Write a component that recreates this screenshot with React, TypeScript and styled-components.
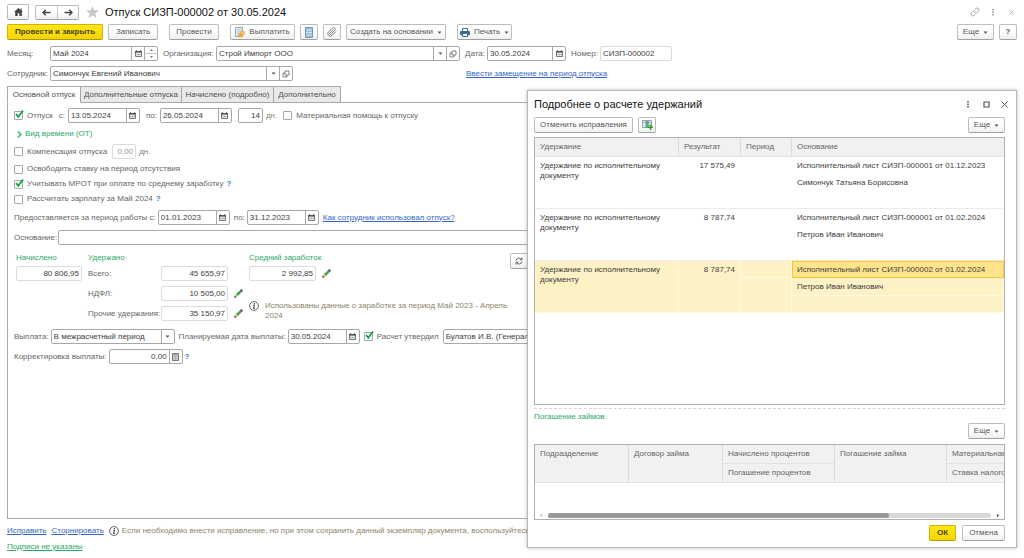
import React from "react";
import styled, { createGlobalStyle, css } from "styled-components";

const c = {
  text: "#404040",
  label: "#666666",
  green: "#2ba866",
  link: "#3468c0",
  hint: "#8c8468",
  line: "#a8a8a8",
  soft: "#dcdcdc",
};

const GlobalStyle = createGlobalStyle`
  *, *::before, *::after { box-sizing: border-box; }
  html, body { margin: 0; padding: 0; background: #fff; }
  svg { flex: none; }
  body, button, input, select, table {
    font-family: "Liberation Sans", Arial, sans-serif;
    font-size: 8px;
    line-height: 10px;
    color: ${c.text};
  }
`;

/* ---------- page ---------- */
const Page = styled.div`
  position: relative;
  display: flex;
  flex-direction: column;
  min-height: 100vh;
  padding: 4px 7px 6px 7px;
  overflow: hidden;
`;

const Row = styled.div<{ $gap?: number; $h?: number; $mt?: number; $mr?: number; $top?: boolean }>`
  display: flex;
  align-items: ${(p) => (p.$top ? "flex-start" : "center")};
  gap: ${(p) => p.$gap ?? 6}px;
  min-height: ${(p) => p.$h ?? 15}px;
  margin-top: ${(p) => p.$mt ?? 0}px;
  margin-right: ${(p) => p.$mr ?? 0}px;
  white-space: nowrap;
`;

const Spacer = styled.div`
  flex: 1;
`;

const Title = styled.h1`
  margin: 0;
  font-size: 11px;
  line-height: 15px;
  font-weight: 400;
  color: #111;
`;

const Button = styled.button<{ $w?: number; $primary?: boolean; $ml?: number }>`
  display: inline-flex;
  align-items: center;
  justify-content: center;
  gap: 4px;
  flex: none;
  width: ${(p) => (p.$w ? `${p.$w}px` : "auto")};
  height: 16px;
  margin: 0 0 0 ${(p) => p.$ml ?? 0}px;
  padding: 0 1px;
  border: 1px solid #bdbdbd;
  border-bottom-color: #a0a0a0;
  border-radius: 2px;
  background: linear-gradient(#ffffff 40%, #efefef);
  color: #555;
  white-space: nowrap;
  ${(p) =>
    p.$primary &&
    css`
      font-weight: 700;
      color: #4a4420;
      border-color: #d0b400;
      border-bottom-color: #b09a10;
      background: linear-gradient(#ffe61a, #f3d500);
    `}
`;

const NavGroup = styled.div`
  display: flex;
  margin: 0 7px 0 6px;
  border: 1px solid #bdbdbd;
  border-bottom-color: #a0a0a0;
  border-radius: 2px;
  background: linear-gradient(#ffffff 40%, #efefef);
`;

const NavButton = styled.button`
  display: flex;
  align-items: center;
  justify-content: center;
  width: 21px;
  height: 13px;
  padding: 0;
  border: 0;
  background: none;
  & + & {
    border-left: 1px solid #c8c8c8;
  }
`;

const IconButton = styled.button`
  display: flex;
  align-items: center;
  justify-content: center;
  padding: 0;
  width: 12px;
  height: 12px;
  border: 0;
  background: none;
`;

/* ---------- fields ---------- */
const Label = styled.label<{ $w?: number; $tone?: string }>`
  flex: none;
  width: ${(p) => (p.$w ? `${p.$w}px` : "auto")};
  color: ${(p) => p.$tone ?? c.label};
`;

const FieldBox = styled.div<{ $w?: number; $soft?: boolean }>`
  display: flex;
  ${(p) => (p.$w ? `flex: none; width: ${p.$w}px;` : "flex: 1;")}
  height: 15px;
  min-width: 0;
  border: 1px solid ${(p) => (p.$soft ? c.soft : c.line)};
  border-radius: 2px;
  background: #fff;
`;

const Input = styled.input<{ $right?: boolean; $dim?: boolean }>`
  flex: 1;
  min-width: 0;
  width: 0;
  padding: 0 2px;
  border: 0;
  outline: 0;
  background: transparent;
  text-align: ${(p) => (p.$right ? "right" : "left")};
  color: ${(p) => (p.$dim ? "#999" : c.text)};
`;

const Part = styled.button`
  display: flex;
  align-items: center;
  justify-content: center;
  flex: none;
  width: 13px;
  padding: 0;
  border: 0;
  border-left: 1px solid ${c.line};
  background: none;
`;

const Spin = styled.div`
  display: flex;
  flex-direction: column;
  flex: none;
  width: 13px;
  border-left: 1px solid ${c.line};
  button {
    display: flex;
    align-items: center;
    justify-content: center;
    flex: 1;
    padding: 0;
    border: 0;
    background: none;
  }
  button + button {
    border-top: 1px solid #c8c8c8;
  }
`;

const Link = styled.a<{ $green?: boolean; $ml?: number }>`
  margin-left: ${(p) => p.$ml ?? 0}px;
  color: ${(p) => (p.$green ? c.green : c.link)};
  text-decoration: underline;
`;

const Help = styled.button`
  padding: 0;
  margin: 0;
  border: 0;
  background: none;
  font-weight: 700;
  color: #2a86d0;
`;

const Green = styled.span`
  color: ${c.green};
`;

const Hint = styled.span<{ $w?: number }>`
  color: ${c.hint};
  ${(p) => p.$w && `flex: none; width: ${p.$w}px; white-space: normal;`}
`;

const CheckLabel = styled.label`
  display: inline-flex;
  align-items: center;
  gap: 4px;
  color: ${c.label};
`;

const CheckWrap = styled.span`
  position: relative;
  display: block;
  width: 9px;
  height: 9px;
  input {
    appearance: none;
    display: block;
    width: 9px;
    height: 9px;
    margin: 0;
    border: 1px solid ${c.line};
    border-radius: 1px;
    background: #fff;
  }
  svg {
    position: absolute;
    left: 0;
    top: -2px;
    pointer-events: none;
  }
`;

/* ---------- tabs and panel ---------- */
const Tabs = styled.div`
  display: flex;
  margin-top: 5px;
`;

const Tab = styled.button<{ $w: number; $active?: boolean }>`
  width: ${(p) => p.$w}px;
  height: 17px;
  margin: 0 0 -1px;
  padding: 0;
  border: 1px solid ${c.line};
  border-left-width: ${(p) => (p.$active ? 1 : 0)}px;
  border-bottom-color: ${(p) => (p.$active ? "#fff" : c.line)};
  background: ${(p) => (p.$active ? "#fff" : "#e9e9e9")};
  color: #505050;
  z-index: 1;
`;

const Panel = styled.section`
  flex: 1;
  display: flex;
  flex-direction: column;
  padding: 5px 6px;
  border: 1px solid ${c.line};
`;

const Totals = styled.div`
  display: flex;
  align-items: flex-start;
  margin: 8px 0 0 2px;
`;

const TotalCol = styled.div<{ $ml?: number; $w?: number }>`
  display: flex;
  flex-direction: column;
  flex: none;
  width: ${(p) => (p.$w ? `${p.$w}px` : "auto")};
  margin-left: ${(p) => p.$ml ?? 0}px;
`;

/* ---------- dialog ---------- */
const Dialog = styled.section`
  position: absolute;
  top: 90px;
  right: 7px;
  bottom: 10px;
  z-index: 2;
  display: flex;
  flex-direction: column;
  width: 490px;
  padding: 6px 11px 6px 6px;
  border: 1px solid #b8b8b8;
  background: #fff;
  box-shadow: 0 0 4px rgba(0, 0, 0, 0.25);
`;

const DialogTitle = styled.h2`
  margin: 0;
  font-size: 11px;
  line-height: 14px;
  font-weight: 400;
  color: #111;
`;

const TableBox = styled.div<{ $grow?: boolean; $mt: number }>`
  display: flex;
  flex-direction: column;
  ${(p) => (p.$grow ? "flex: 1;" : "height: 76px;")}
  margin-top: ${(p) => p.$mt}px;
  border: 1px solid #b0b0b0;
  overflow: hidden;
`;

const Grid = styled.table<{ $w?: number }>`
  flex: none;
  width: ${(p) => (p.$w ? `${p.$w}px` : "100%")};
  border-collapse: separate;
  border-spacing: 0;
  table-layout: fixed;
  th {
    height: 18px;
    padding: 4px 5px;
    background: #f1f1f1;
    border-right: 1px solid #dcdcdc;
    border-bottom: 1px solid #e2e2e2;
    font-weight: 400;
    text-align: left;
    vertical-align: top;
    color: ${c.label};
    white-space: nowrap;
  }
  th:last-child {
    border-right: 0;
  }
`;

const Cell = styled.td<{ $on?: boolean; $cur?: boolean; $right?: boolean; $end?: boolean; $h?: number }>`
  height: ${(p) => p.$h ?? 17}px;
  padding: 4px 5px 0;
  vertical-align: top;
  text-align: ${(p) => (p.$right ? "right" : "left")};
  border-right: 1px solid ${(p) => (p.$on ? "#fff8e2" : "transparent")};
  border-bottom: 1px solid ${(p) => (p.$on ? "#fff8e2" : p.$end ? "#ececec" : "transparent")};
  background: ${(p) => (p.$on ? "#fdf1c6" : "#fff")};
  ${(p) =>
    p.$cur &&
    css`
      padding: 3px 4px 0;
      border: 1px solid #f5c830;
      background: #ffe48c;
    `}
`;

const Divider = styled.div`
  margin-top: 3px;
  border-top: 1px dashed #d4d4d4;
`;

const ScrollRow = styled.div`
  display: flex;
  align-items: center;
  gap: 5px;
  margin-top: auto;
  padding: 0 4px 1px;
`;

const Track = styled.div`
  flex: 1;
  height: 5px;
  border-radius: 3px;
  background: #d8d8d8;
`;

const Thumb = styled.div`
  width: 77%;
  height: 5px;
  border-radius: 3px;
  background: #999;
`;

/* ---------- icons ---------- */
const CalendarIcon = () => (
  <svg width="7" height="7" viewBox="0 0 7 7">
    <path d="M0.5 1.5h6v5h-6z" fill="#e4e4e4" stroke="#777" />
    <path d="M0 1h7v1.600H0z" fill="#555" />
    <path d="M1.500 0v1M5.500 0v1" stroke="#777" />
    <path d="M1.500 4.500h4" stroke="#999" strokeDasharray="1 .5" />
  </svg>
);
const Caret = () => (
  <svg width="5" height="3" viewBox="0 0 5 3">
    <path d="M0.5 0.5h4L2.5 2.7z" fill="#555" />
  </svg>
);
const Tiny = ({ down }: { down?: boolean }) => (
  <svg width="3" height="2" viewBox="0 0 3 2">
    <path d={down ? "M0 0h3L1.5 2z" : "M0 2h3L1.5 0z"} fill="#777" />
  </svg>
);
const OpenIcon = () => (
  <svg width="8" height="8" viewBox="0 0 8 8" fill="none" stroke="#666" strokeWidth=".8">
    <path d="M3 1h4v4H3z" />
    <path d="M3 3H1v4h4V5" />
  </svg>
);
const CalcIcon = () => (
  <svg width="7" height="8" viewBox="0 0 7 8">
    <path d="M.5.5h6v7h-6z" fill="#ddd" stroke="#777" />
    <path d="M1.5 2h4" stroke="#777" />
    <path d="M1.5 4h4M1.5 6h4" stroke="#888" strokeDasharray="1 .5" />
  </svg>
);
const HomeIcon = () => (
  <svg width="9" height="8" viewBox="0 0 9 8">
    <path d="M4.5 0 9 4H7.8v4H5.4V5.2H3.6V8H1.2V4H0z" fill="#444" />
    <path d="M6.6.5h1.2v2H6.6z" fill="#444" />
  </svg>
);
const Arrow = ({ right }: { right?: boolean }) => (
  <svg width="9" height="7" viewBox="0 0 9 7">
    <path
      d={right ? "M.5 3.5h7.5M5.2.8 8 3.5 5.2 6.2" : "M8.500 3.500H1M3.800.8 1 3.500 3.800 6.200"}
      fill="none"
      stroke="#444"
      strokeWidth="1.4"
    />
  </svg>
);
const Star = () => (
  <svg width="13" height="12" viewBox="0 0 13 12">
    <path d="M6.5 0 8.200 4.200 13 4.500 9.300 7.400 10.500 12 6.500 9.400 2.500 12 3.700 7.400 0 4.500 4.800 4.200z" fill="#c9c9c9" />
  </svg>
);
const LinkIcon = () => (
  <svg width="10" height="10" viewBox="0 0 24 24" fill="none" stroke="#aaa" strokeWidth="2.4">
    <path d="M10 13a5 5 0 0 0 7.500.500l3-3a5 5 0 0 0-7-7l-1.700 1.700" />
    <path d="M14 11a5 5 0 0 0-7.500-.500l-3 3a5 5 0 0 0 7 7l1.700-1.700" />
  </svg>
);
const Dots = ({ color = "#777" }: { color?: string }) => (
  <svg width="2" height="8" viewBox="0 0 2 8" fill={color}>
    <path d="M0 1h2v1.500H0zM0 3.500h2V5H0zM0 6h2v1.500H0z" />
  </svg>
);
const Cross = ({ size = 7, color = "#555" }: { size?: number; color?: string }) => (
  <svg width={size} height={size} viewBox="0 0 7 7">
    <path d="M.5.5l6 6M6.500.5l-6 6" stroke={color} />
  </svg>
);
const Square = () => (
  <svg width="7" height="7" viewBox="0 0 7 7">
    <path d="M1 1h5v5H1z" fill="none" stroke="#555" strokeWidth="1.200" />
  </svg>
);
const PayIcon = () => (
  <svg width="10" height="11" viewBox="0 0 10 11">
    <path d="M.5.5h7v9h-7z" fill="#dfeaf3" stroke="#8aa6bd" />
    <path d="M2 3h4M2 5h4M2 7h3" stroke="#9cb6ca" strokeWidth=".7" />
    <circle cx="5.500" cy="8.300" r="2.300" fill="#f0a830" />
    <circle cx="7.500" cy="6" r="2.200" fill="#f6c45a" stroke="#cf8a20" strokeWidth=".4" />
  </svg>
);
const ListIcon = () => (
  <svg width="8" height="11" viewBox="0 0 8 11">
    <path d="M.5.5h7v10h-7z" fill="#9dbcd6" stroke="#7298b8" />
    <path d="M1 3h6M1 5.500h6M1 8h6" stroke="#e3edf5" strokeWidth=".8" />
  </svg>
);
const ClipIcon = () => (
  <svg width="10" height="10" viewBox="0 0 24 24" fill="none" stroke="#777" strokeWidth="2.200">
    <path d="m21.400 11-9.200 9.200a6 6 0 0 1-8.500-8.500l9.200-9.200a4 4 0 0 1 5.700 5.700l-9.200 9.200a2 2 0 0 1-2.800-2.800l8.500-8.500" />
  </svg>
);
const PrintIcon = () => (
  <svg width="10" height="9" viewBox="0 0 10 9">
    <path d="M2.500.5h5v3h-5z" fill="#fff" stroke="#3d6d92" />
    <rect x="0" y="3" width="10" height="4.200" rx="1" fill="#3d6d92" />
    <path d="M2.500 5.500h5v3h-5z" fill="#fff" stroke="#3d6d92" />
  </svg>
);
const Pencil = () => (
  <svg width="9" height="9" viewBox="0 0 9 9">
    <path d="M0 9 .8 6.300 2.700 8.200z" fill="#555" />
    <path d="M.8 6.300 2 5.100 3.900 7 2.700 8.200z" fill="#e6b877" />
    <path d="M2 5.100 6 1.200 7.800 3 3.900 7z" fill="#3da54a" />
    <path d="M6 1.200 7 .2Q7.400 0 7.800.4L8.700 1.300Q9 1.600 8.700 2L7.800 3z" fill="#444" />
  </svg>
);
const InfoIcon = () => (
  <svg width="10" height="10" viewBox="0 0 10 10">
    <circle cx="5" cy="5" r="4.400" fill="#fff" stroke="#555" strokeWidth=".9" />
    <path d="M5.400 2v1.200M4.200 4.300h1.100L4.700 7.500h1" fill="none" stroke="#444" strokeWidth="1.100" />
  </svg>
);
const Refresh = () => (
  <svg width="8" height="8" viewBox="0 0 8 8" fill="none" stroke="#555" strokeWidth=".9">
    <path d="M1 3.600A3 3 0 0 1 6.500 2.400M7 .5v2.300H4.800M7 4.400A3 3 0 0 1 1.500 5.600M1 7.500V5.200h2.200" />
  </svg>
);
const Chevron = () => (
  <svg width="5" height="7" viewBox="0 0 5 7">
    <path d="M.8.5 4 3.500.8 6.500" fill="none" stroke={c.green} strokeWidth="1.200" />
  </svg>
);
const TableAddIcon = () => (
  <svg width="11" height="10" viewBox="0 0 11 10">
    <path d="M.5.5h9v7h-9z" fill="#e9f1f7" stroke="#6f93ad" strokeWidth=".8" />
    <path d="M4 1h2.600v6.500H4z" fill="#5fae6c" />
    <path d="M1 2.500h8.500M3.600.5v7M6.800.5v7" stroke="#6f93ad" strokeWidth=".6" />
    <path d="M8.500 4.500V10M5.800 7.300H11" stroke="#2ea32e" strokeWidth="1.500" />
  </svg>
);
const ScrollArrow = ({ right }: { right?: boolean }) => (
  <svg width="4" height="5" viewBox="0 0 4 5">
    <path d={right ? "M1 .8v3.400L3.200 2.500z" : "M3 .8v3.400L.8 2.500z"} fill={right ? "#555" : "#bbb"} />
  </svg>
);

/* ---------- composite controls ---------- */
type FieldProps = {
  id: string;
  value: string;
  w?: number;
  soft?: boolean;
  right?: boolean;
  dim?: boolean;
  name?: string;
  children?: React.ReactNode;
};
const Field = ({ id, value, w, soft, right, dim, name, children }: FieldProps) => (
  <FieldBox $w={w} $soft={soft}>
    <Input id={id} defaultValue={value} $right={right} $dim={dim} aria-label={name} />
    {children}
  </FieldBox>
);

const CalendarPart = () => (
  <Part aria-label="Календарь">
    <CalendarIcon />
  </Part>
);
const DropPart = () => (
  <Part aria-label="Выбрать">
    <Caret />
  </Part>
);

const Check = ({ on, children }: { on?: boolean; children: React.ReactNode }) => (
  <CheckLabel>
    <CheckWrap>
      <input type="checkbox" defaultChecked={on} />
      {on && (
        <svg width="11" height="10" viewBox="0 0 11 10">
          <path d="M2 5 4.300 7.800 9 1.500" fill="none" stroke="#15a04e" strokeWidth="1.800" />
        </svg>
      )}
    </CheckWrap>
    {children}
  </CheckLabel>
);

const MoreButton = () => (
  <Button $w={37}>
    Еще <Caret />
  </Button>
);

const deductions = [
  { sum: "17 575,49", doc: "Исполнительный лист СИЗП-000001 от 01.12.2023", who: "Симончук Татьяна Борисовна" },
  { sum: "8 787,74", doc: "Исполнительный лист СИЗП-000001 от 01.02.2024", who: "Петров Иван Иванович" },
  { sum: "8 787,74", doc: "Исполнительный лист СИЗП-000002 от 01.02.2024", who: "Петров Иван Иванович", on: true },
];

const DeductionsDialog = () => (
  <Dialog role="dialog" aria-labelledby="dlg-title">
    <Row $gap={6} $h={14} $mr={-5}>
      <DialogTitle id="dlg-title">Подробнее о расчете удержаний</DialogTitle>
      <Spacer />
      <IconButton aria-label="Меню"><Dots /></IconButton>
      <IconButton aria-label="Развернуть"><Square /></IconButton>
      <IconButton aria-label="Закрыть"><Cross /></IconButton>
    </Row>
    <Row $gap={5} $h={16} $mt={6}>
      <Button $w={99}>Отменить исправления</Button>
      <Button $w={18} aria-label="Добавить"><TableAddIcon /></Button>
      <Spacer />
      <MoreButton />
    </Row>
    <TableBox $grow $mt={4}>
      <Grid>
        <colgroup>
          <col style={{ width: 144 }} />
          <col style={{ width: 62 }} />
          <col style={{ width: 51 }} />
          <col />
        </colgroup>
        <thead>
          <tr>
            <th>Удержание</th>
            <th>Результат</th>
            <th>Период</th>
            <th>Основание</th>
          </tr>
        </thead>
        {deductions.map((d, i) => (
          <tbody key={i}>
            <tr>
              <Cell rowSpan={3} $on={d.on} $end>Удержание по исполнительному документу</Cell>
              <Cell rowSpan={3} $on={d.on} $end $right>{d.sum}</Cell>
              <Cell $on={d.on} />
              <Cell $on={d.on} $cur={d.on}>{d.doc}</Cell>
            </tr>
            <tr>
              <Cell rowSpan={2} $on={d.on} $end />
              <Cell $on={d.on} $h={18}>{d.who}</Cell>
            </tr>
            <tr>
              <Cell $on={d.on} $end />
            </tr>
          </tbody>
        ))}
      </Grid>
    </TableBox>
    <Divider />
    <Row $h={10} $mt={3}><Green>Погашение займов</Green></Row>
    <Row $h={16} $mt={1}>
      <Spacer />
      <MoreButton />
    </Row>
    <TableBox $mt={5}>
      <Grid $w={520}>
        <colgroup>
          <col style={{ width: 94 }} />
          <col style={{ width: 94 }} />
          <col style={{ width: 112 }} />
          <col style={{ width: 112 }} />
          <col />
        </colgroup>
        <thead>
          <tr>
            <th rowSpan={2}>Подразделение</th>
            <th rowSpan={2}>Договор займа</th>
            <th>Начислено процентов</th>
            <th rowSpan={2}>Погашение займа</th>
            <th>Материальная</th>
          </tr>
          <tr>
            <th>Погашение процентов</th>
            <th>Ставка налогообложения</th>
          </tr>
        </thead>
      </Grid>
      <ScrollRow>
        <ScrollArrow />
        <Track><Thumb /></Track>
        <ScrollArrow right />
      </ScrollRow>
    </TableBox>
    <Row $gap={6} $h={16} $mt={5}>
      <Spacer />
      <Button $w={27} $primary>ОК</Button>
      <Button $w={43}>Отмена</Button>
    </Row>
  </Dialog>
);

export default function App() {
  return (
    <>
      <GlobalStyle />
      <Page>
        <Row $gap={0}>
          <Button $w={22} aria-label="Домой"><HomeIcon /></Button>
          <NavGroup>
            <NavButton aria-label="Назад"><Arrow /></NavButton>
            <NavButton aria-label="Вперед"><Arrow right /></NavButton>
          </NavGroup>
          <Row>
            <Star />
            <Title>Отпуск СИЗП-000002 от 30.05.2024</Title>
          </Row>
          <Spacer />
          <Row>
            <IconButton aria-label="Ссылка"><LinkIcon /></IconButton>
            <IconButton aria-label="Меню"><Dots color="#aaa" /></IconButton>
            <IconButton aria-label="Закрыть"><Cross size={5} color="#999" /></IconButton>
          </Row>
        </Row>

        <Row $gap={5} $h={16} $mt={4}>
          <Button $w={96} $primary>Провести и закрыть</Button>
          <Button $w={50}>Записать</Button>
          <Button $w={50} $ml={6}>Провести</Button>
          <Button $w={65} $ml={6}><PayIcon /> Выплатить</Button>
          <Button $w={18} aria-label="Список"><ListIcon /></Button>
          <Button $w={18} aria-label="Файлы"><ClipIcon /></Button>
          <Button $w={100}>Создать на основании <Caret /></Button>
          <Button $w={55} $ml={6}><PrintIcon /> Печать <Caret /></Button>
          <Spacer />
          <MoreButton />
          <Button $w={18}><b>?</b></Button>
        </Row>

        <Row $gap={0} $mt={6}>
          <Label htmlFor="month" $w={43}>Месяц:</Label>
          <Field id="month" value="Май 2024" w={108}>
            <CalendarPart />
            <Spin>
              <button aria-label="Больше"><Tiny /></button>
              <button aria-label="Меньше"><Tiny down /></button>
            </Spin>
          </Field>
          <Label htmlFor="org" $w={58}>
            <Row $gap={5}><span />Организация:</Row>
          </Label>
          <Row $gap={5}>
            <Field id="org" value="Строй Импорт ООО" w={244}>
              <DropPart />
              <Part aria-label="Открыть"><OpenIcon /></Part>
            </Field>
            <Label htmlFor="date" $w={17}>Дата:</Label>
            <Field id="date" value="30.05.2024" w={79}><CalendarPart /></Field>
            <Label htmlFor="num" $w={24}>Номер:</Label>
            <Field id="num" value="СИЗП-000002" w={72} soft />
          </Row>
        </Row>

        <Row $gap={0} $mt={5}>
          <Label htmlFor="emp" $w={43}>Сотрудник:</Label>
          <Field id="emp" value="Симончук Евгений Иванович" w={243}>
            <DropPart />
            <Part aria-label="Открыть"><OpenIcon /></Part>
          </Field>
          <Link href="#" $ml={173}>Ввести замещение на период отпуска</Link>
        </Row>

        <Tabs role="tablist">
          <Tab role="tab" $w={74} $active>Основной отпуск</Tab>
          <Tab role="tab" $w={101}>Дополнительные отпуска</Tab>
          <Tab role="tab" $w={92}>Начислено (подробно)</Tab>
          <Tab role="tab" $w={67}>Дополнительно</Tab>
        </Tabs>

        <Panel>
          <Row>
            <Check on>Отпуск</Check>
            <Row $gap={3}>
              <Label htmlFor="from">с:</Label>
              <Field id="from" value="13.05.2024" w={72}><CalendarPart /></Field>
            </Row>
            <Row $gap={3}>
              <Label htmlFor="to">по:</Label>
              <Field id="to" value="26.05.2024" w={72}><CalendarPart /></Field>
            </Row>
            <Row $gap={3}>
              <Field id="days" value="14" w={25} right name="Количество дней" />
              <Label htmlFor="days" $tone={c.hint}>дн.</Label>
            </Row>
            <Check>Материальная помощь к отпуску</Check>
          </Row>
          <Row $h={10} $mt={6} $gap={3}>
            <span />
            <Chevron />
            <Green>Вид времени (ОТ)</Green>
          </Row>
          <Row $mt={5} $gap={5}>
            <Check>Компенсация отпуска</Check>
            <Row $gap={3}>
              <Field id="comp" value="0,00" w={24} soft right dim name="Дней компенсации" />
              <Label htmlFor="comp" $tone={c.hint}>дн.</Label>
            </Row>
          </Row>
          <Row $h={10} $mt={5}><Check>Освободить ставку на период отсутствия</Check></Row>
          <Row $h={10} $mt={5} $gap={3}>
            <Check on>Учитывать МРОТ при оплате по среднему заработку</Check>
            <Help>?</Help>
          </Row>
          <Row $h={10} $mt={5} $gap={3}>
            <Check>Рассчитать зарплату за Май 2024</Check>
            <Help>?</Help>
          </Row>
          <Row $mt={6} $gap={4}>
            <Row $gap={2}>
              <Label htmlFor="p1">Предоставляется за период работы с:</Label>
              <Field id="p1" value="01.01.2023" w={72}><CalendarPart /></Field>
            </Row>
            <Row $gap={2}>
              <Label htmlFor="p2">по:</Label>
              <Field id="p2" value="31.12.2023" w={72}><CalendarPart /></Field>
            </Row>
            <Link href="#">Как сотрудник использовал отпуск?</Link>
          </Row>
          <Row $mt={5} $gap={0}>
            <Label htmlFor="base" $w={44}>Основание:</Label>
            <Field id="base" value="" />
          </Row>

          <Totals>
            <TotalCol>
              <Row $h={10}><Green>Начислено</Green></Row>
              <Row $mt={3}><Field id="acc" value="80 806,95" w={66} soft right name="Начислено" /></Row>
            </TotalCol>
            <TotalCol $ml={6}>
              <Row $h={10}><Green>Удержано</Green></Row>
              <Row $mt={3} $gap={0}>
                <Label htmlFor="t1" $w={73}>Всего:</Label>
                <Field id="t1" value="45 655,97" w={67} soft right />
              </Row>
              <Row $mt={5} $gap={0}>
                <Label htmlFor="t2" $w={73}>НДФЛ:</Label>
                <Row>
                  <Field id="t2" value="10 505,00" w={67} soft right />
                  <Pencil />
                </Row>
              </Row>
              <Row $mt={5} $gap={0}>
                <Label htmlFor="t3" $w={73}>Прочие удержания:</Label>
                <Row>
                  <Field id="t3" value="35 150,97" w={67} soft right />
                  <Pencil />
                </Row>
              </Row>
            </TotalCol>
            <TotalCol $ml={6} $w={257}>
              <Row $h={10}><Green>Средний заработок</Green></Row>
              <Row $mt={3}>
                <Field id="avg" value="2 992,85" w={67} soft right name="Средний заработок" />
                <Pencil />
              </Row>
              <Row $mt={20} $h={20} $top>
                <InfoIcon />
                <Hint $w={250}>Использованы данные о заработке за период Май 2023 - Апрель 2024</Hint>
              </Row>
            </TotalCol>
            <Button $w={18} $ml={4} aria-label="Обновить"><Refresh /></Button>
          </Totals>

          <Row $mt={8} $gap={4}>
            <Row $gap={2}>
              <Label htmlFor="pay">Выплата:</Label>
              <Field id="pay" value="В межрасчетный период" w={124}><DropPart /></Field>
            </Row>
            <Row $gap={2}>
              <Label htmlFor="plan">Планируемая дата выплаты:</Label>
              <Field id="plan" value="30.05.2024" w={72}><CalendarPart /></Field>
            </Row>
            <Check on>Расчет утвердил</Check>
            <Field id="approver" value="Булатов И.В. (Генеральный директор)" w={180} name="Утвердил"><DropPart /></Field>
          </Row>
          <Row $mt={5} $gap={2}>
            <Label htmlFor="corr">Корректировка выплаты:</Label>
            <Field id="corr" value="0,00" w={74} right>
              <Part aria-label="Калькулятор"><CalcIcon /></Part>
            </Field>
            <Help>?</Help>
          </Row>
        </Panel>

        <Row $mt={7} $h={10} $gap={5}>
          <Link href="#">Исправить</Link>
          <Link href="#">Сторнировать</Link>
          <Row $h={10} $gap={3}>
            <InfoIcon />
            <Hint>Если необходимо внести исправление, но при этом сохранить данный экземпляр документа, воспользуйтесь командой Исправить</Hint>
          </Row>
        </Row>
        <Row $mt={6} $h={10}><Link href="#" $green>Подписи не указаны</Link></Row>

        <DeductionsDialog />
      </Page>
    </>
  );
}
